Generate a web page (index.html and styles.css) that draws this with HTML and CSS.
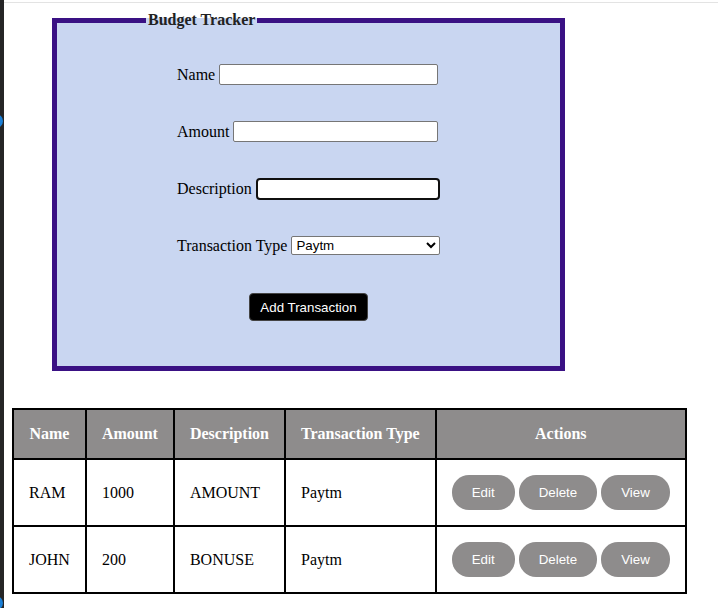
FILE: index.html
```html
<!DOCTYPE html>
<html lang="en">
<head>
    <meta charset="UTF-8">
    <meta name="viewport" content="width=device-width, initial-scale=1.0">
    <title>Budget Tracker</title>
    <link rel="stylesheet" href="styles.css">
</head>
<body>

    <div class="frame">
        <div class="sidebar">
            <span class="dot dot-top"></span>
            <span class="dot dot-bottom"></span>
        </div>

        <div class="page">
            <fieldset class="tracker">
                <legend>Budget Tracker</legend>
                <form id="budgetForm" class="budget-form">
                    <div class="row">
                        <label for="name">Name</label>
                        <input type="text" id="name" name="name">
                    </div>
                    <div class="row">
                        <label for="amount">Amount</label>
                        <input type="text" id="amount" name="amount">
                    </div>
                    <div class="row">
                        <label for="description">Description</label>
                        <input type="text" id="description" name="description" class="focused">
                    </div>
                    <div class="row">
                        <label for="type">Transaction Type</label>
                        <select id="type" name="type">
                            <option value="paytm" selected>Paytm</option>
                            <option value="gpay">GPay</option>
                            <option value="cash">Cash</option>
                        </select>
                    </div>
                    <div class="submit-row">
                        <button type="submit" class="add-btn">Add Transaction</button>
                    </div>
                </form>
            </fieldset>

            <table class="transactions">
                <thead>
                    <tr>
                        <th>Name</th>
                        <th>Amount</th>
                        <th>Description</th>
                        <th>Transaction Type</th>
                        <th>Actions</th>
                    </tr>
                </thead>
                <tbody>
                    <tr>
                        <td>RAM</td>
                        <td>1000</td>
                        <td>AMOUNT</td>
                        <td>Paytm</td>
                        <td class="actions">
                            <button class="action-btn">Edit</button>
                            <button class="action-btn">Delete</button>
                            <button class="action-btn">View</button>
                        </td>
                    </tr>
                    <tr>
                        <td>JOHN</td>
                        <td>200</td>
                        <td>BONUSE</td>
                        <td>Paytm</td>
                        <td class="actions">
                            <button class="action-btn">Edit</button>
                            <button class="action-btn">Delete</button>
                            <button class="action-btn">View</button>
                        </td>
                    </tr>
                </tbody>
            </table>
        </div>
    </div>

</body>
</html>
```

FILE: styles.css
```css
/* Budget tracker page */
html, body {
    margin: 0;
    padding: 0;
    background-color: #fff;
    height: 100%;
}

.frame {
    display: flex;
    min-height: 100%;
    font-family: "Liberation Serif", "Times New Roman", serif;
    font-size: 16px;
    color: #000;
}

.sidebar {
    position: relative;
    width: 4px;
    flex-shrink: 0;
    background-color: #252526;
    overflow: hidden;
}

.dot {
    position: absolute;
    left: -11px;
    width: 14px;
    height: 14px;
    border-radius: 50%;
    background-color: #1b7fd6;
}

.dot-top {
    top: 114px;
}

.dot-bottom {
    top: 596px;
}

.page {
    flex: 1;
    margin-top: 2px;
    border-top: 1px solid #e3e3e3;
    padding: 8px;
}

.tracker {
    width: 503px;
    margin: 0 0 37px 40px;
    padding: 0;
    border: 5px solid #3a1184;
    background-color: #c9d6f1;
}

.tracker legend {
    margin-left: 89px;
    padding: 0 2px;
    font-weight: bold;
    color: #222;
}

.budget-form {
    width: 263px;
    margin: 0 auto;
    padding: 35px 0 45px 0;
}

.row {
    display: flex;
    align-items: center;
    gap: 4px;
    height: 21px;
    padding-right: 2px;
    margin-bottom: 36px;
}

.row label {
    white-space: nowrap;
}

.row input,
.row select {
    flex: 1;
    min-width: 0;
    margin: 0;
    font-family: Arial, "Liberation Sans", sans-serif;
    font-size: 13.33px;
}

.row input {
    height: 21px;
    box-sizing: border-box;
    border: 1px solid #767676;
    border-radius: 2px;
    padding: 1px 2px;
    background-color: #fff;
}

.row select {
    height: 19px;
    margin-right: -2px;
    border: 1px solid #767676;
    border-radius: 2px;
    background-color: #fff;
}

.row input.focused,
.row input:focus {
    height: 22px;
    margin-right: -2px;
    border: 2px solid #101010;
    border-radius: 4px;
    outline: none;
}

.submit-row {
    display: flex;
    justify-content: center;
    margin-top: 37px;
}

.add-btn {
    background-color: #000;
    color: #fff;
    font-family: Arial, "Liberation Sans", sans-serif;
    font-size: 13.33px;
    padding: 6px 10px;
    border: 1px solid #444;
    border-radius: 4px;
    height: 28px;
    cursor: pointer;
}

.transactions {
    border-collapse: collapse;
    border: 2px solid #000;
}

.transactions th,
.transactions td {
    border: 2px solid #000;
    padding: 15px;
    white-space: nowrap;
}

.transactions th {
    background-color: #8e8c8c;
    color: #fff;
    font-weight: bold;
}

.transactions td {
    text-align: left;
}

.action-btn {
    background-color: #8e8c8c;
    color: #fff;
    font-family: Arial, "Liberation Sans", sans-serif;
    font-size: 13.33px;
    padding: 10px 20px;
    border: none;
    border-radius: 17px;
    cursor: pointer;
}
```
